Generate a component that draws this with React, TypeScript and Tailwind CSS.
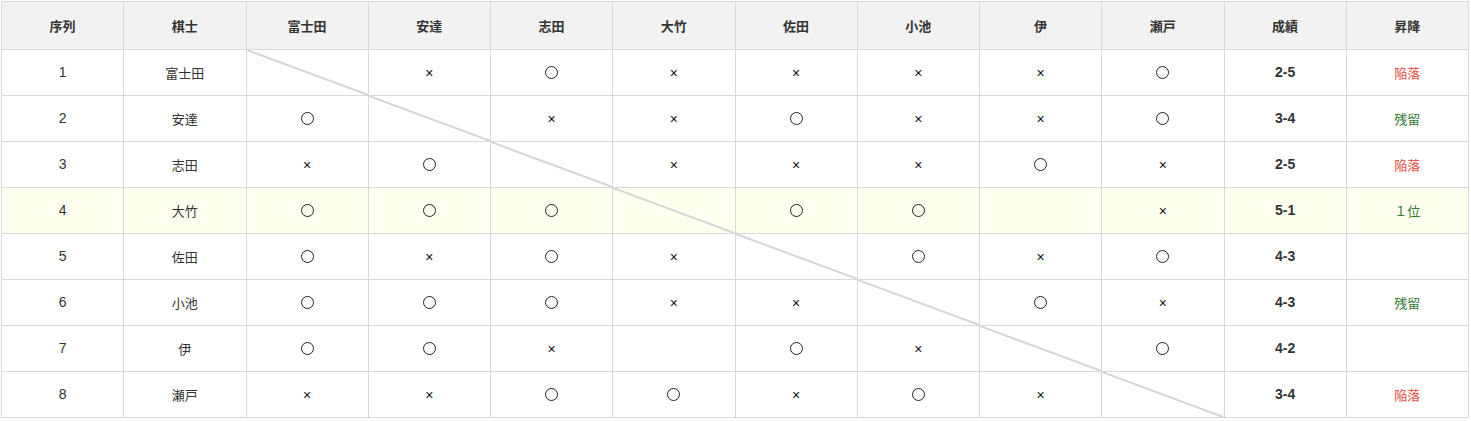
const players = ["富士田", "安達", "志田", "大竹", "佐田", "小池", "伊", "瀬戸"];

type Row = {
  no: number;
  name: string;
  results: string[];
  score: string;
  status: "down" | "stay" | "top" | "";
};

const rows: Row[] = [
  { no: 1, name: "富士田", results: ["-", "×", "○", "×", "×", "×", "×", "○"], score: "2-5", status: "down" },
  { no: 2, name: "安達", results: ["○", "-", "×", "×", "○", "×", "×", "○"], score: "3-4", status: "stay" },
  { no: 3, name: "志田", results: ["×", "○", "-", "×", "×", "×", "○", "×"], score: "2-5", status: "down" },
  { no: 4, name: "大竹", results: ["○", "○", "○", "-", "○", "○", "", "×"], score: "5-1", status: "top" },
  { no: 5, name: "佐田", results: ["○", "×", "○", "×", "-", "○", "×", "○"], score: "4-3", status: "" },
  { no: 6, name: "小池", results: ["○", "○", "○", "×", "×", "-", "○", "×"], score: "4-3", status: "stay" },
  { no: 7, name: "伊", results: ["○", "○", "×", "", "○", "×", "-", "○"], score: "4-2", status: "" },
  { no: 8, name: "瀬戸", results: ["×", "×", "○", "○", "×", "○", "×", "-"], score: "3-4", status: "down" },
];

const statusLabel = { down: "陥落", stay: "残留", top: "１位", "": "" };
const statusColor = {
  down: "text-[#e74c3c]",
  stay: "text-[#2e7d32]",
  top: "text-[#2e7d32]",
  "": "",
};

const cell = "h-[46px] border border-[#d9d9d9] text-center align-middle";

function Mark({ value }: { value: string }) {
  if (value === "○") {
    return <span className="mx-auto block h-[13px] w-[13px] rounded-full border-[1.5px] border-[#222]" />;
  }
  if (value === "×") {
    return <span className="relative top-px font-['Liberation_Sans',sans-serif] text-[14px] text-[#111]">×</span>;
  }
  return null;
}

export default function App() {
  return (
    <div className="bg-white px-px pt-px font-['Noto_Sans_CJK_JP','Noto_Sans',sans-serif] text-[13px] text-[#333]">
      <table className="w-[1468px] table-fixed border-collapse">
        <thead>
          <tr className="bg-[#f2f2f2]">
            {["序列", "棋士", ...players, "成績", "昇降"].map((h) => (
              <th key={h} className="h-[48px] border border-[#d9d9d9] text-center font-bold">
                {h}
              </th>
            ))}
          </tr>
        </thead>
        <tbody>
          {rows.map((r) => (
            <tr key={r.no} className={r.status === "top" ? "bg-[#fffff0]" : "bg-white"}>
              <td className={`${cell} font-['Liberation_Sans',sans-serif] text-[14px]`}>{r.no}</td>
              <td className={cell}>{r.name}</td>
              {r.results.map((v, i) =>
                v === "-" ? (
                  <td key={i} className={`${cell} relative p-0`}>
                    <svg className="absolute inset-0 h-full w-full" preserveAspectRatio="none">
                      <line x1="0" y1="0" x2="100%" y2="100%" stroke="#d6d6d6" strokeWidth="2" />
                    </svg>
                  </td>
                ) : (
                  <td key={i} className={cell}>
                    <Mark value={v} />
                  </td>
                )
              )}
              <td className={`${cell} font-['Liberation_Sans',sans-serif] text-[14px] font-bold`}>{r.score}</td>
              <td className={`${cell} ${statusColor[r.status]}`}>{statusLabel[r.status]}</td>
            </tr>
          ))}
        </tbody>
      </table>
    </div>
  );
}
